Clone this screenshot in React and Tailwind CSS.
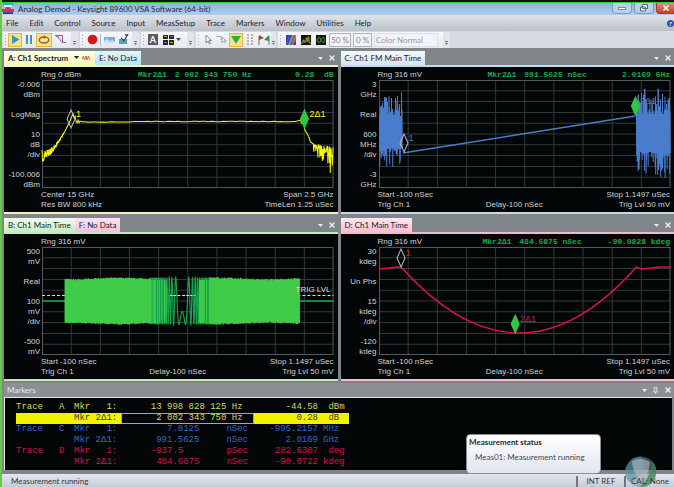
import { useState } from 'react';
import { X, Pin } from 'lucide-react';
import clsx from 'clsx';

const menus = ['File', 'Edit', 'Control', 'Source', 'Input', 'MeasSetup', 'Trace', 'Markers', 'Window', 'Utilities', 'Help'];

// small seeded generator so the noise is the same on every render
const makeRandom = (seed) => {
  let s = seed;
  return () => {
    s = (s * 16807) % 2147483647;
    return s / 2147483647;
  };
};

const toPath = (points) => 'M' + points.map(([x, y]) => `${x.toFixed(1)} ${y.toFixed(1)}`).join('L');

function spectrumPath() {
  const rnd = makeRandom(41);
  const pts = [];
  for (let x = 0; x < 25; x += 0.25) {
    const base = 76 - 31 * Math.pow(x / 26, 1.7);
    const spread = 6 * Math.pow(1 - x / 26, 1.3);
    pts.push([x, base + (rnd() - 0.5) * 2 * spread]);
  }
  pts.push([26, 45], [28, 41], [29, 38], [31, 34], [32, 38], [33, 36], [34, 41], [35, 43], [36, 40], [37, 43], [38, 41]);
  for (let x = 40; x < 256; x += 3) {
    pts.push([x, 42 - (x > 90 ? 0.5 : 0) + (rnd() - 0.5) * 0.6]);
  }
  pts.push([258, 40], [259, 43], [260, 41], [262, 40], [262, 49], [266, 56], [268, 62], [271, 64]);
  for (let x = 271; x <= 291; x += 0.4) {
    const t = (x - 271) / 20;
    pts.push([x, 64 + t * 3 + rnd() * rnd() * (8 + 26 * t)]);
  }
  return toPath(pts);
}

function noisePath(from, to, top, bottom, reach, seed) {
  const rnd = makeRandom(seed);
  const pts = [];
  for (let x = from; x <= to; x += 0.5) {
    pts.push([x, top + 4 - Math.pow(rnd(), 3) * reach]);
    pts.push([x + 0.2, bottom - 4 + Math.pow(rnd(), 3) * reach]);
  }
  return toPath(pts);
}

function chirpPath() {
  const pts = [];
  for (let x = 108; x <= 176; x += 0.1) {
    const d = x - 140;
    pts.push([x, 54 + 23.5 * Math.sin(0.47 + 0.1 * d * d)]);
  }
  return toPath(pts);
}

function burstPath(from, to, fadeFrom, fadeTo, seed) {
  const rnd = makeRandom(seed);
  const pts = [];
  for (let x = from; x <= to; x += 0.5) {
    const wave = 0.8 * Math.sin(x / 16);
    pts.push([x, 31 + wave + rnd() * 1.8], [x, 77 - wave - rnd() * 1.8]);
  }
  let d = toPath(pts);
  const step = fadeTo > fadeFrom ? 1 : -1;
  for (let x = fadeFrom; step * (fadeTo - x) > 0; x += step * (0.8 + rnd() * 2)) {
    d += `M${x.toFixed(1)} 33V76`;
  }
  return d;
}

const panes = [
  {
    id: 'A',
    tabs: [
      { label: 'A: Ch1 Spectrum', tone: 'from-[#ffffec] to-[#f4f6b8]', active: true },
      { label: 'E: No Data', tone: 'from-[#e4f6fc] to-[#b4e4f4]' },
    ],
    strip: 'border-[#f3f3bd]',
    range: 'Rng 0 dBm',
    marker: { name: 'Mkr2Δ1', x: '2 002 343 750 Hz', y: '0.28  dB', indent: 'w-[97px]' },
    scale: [['-0.006', 'dBm'], ['LogMag'], ['10', 'dB', '/div'], ['-100.006', 'dBm']],
    footer: [['Center 15 GHz', 'Span 2.5 GHz'], ['Res BW 800 kHz', 'TimeLen 1.25 uSec']],
    color: '#f6f60c',
    traces: [{ d: spectrumPath() }],
    diamonds: [
      { x: 29, y: 39, label: '1' },
      { x: 262, y: 39, label: '2Δ1', solid: true },
    ],
  },
  {
    id: 'C',
    tabs: [{ label: 'C: Ch1 FM Main Time', tone: 'from-[#f4f9ff] to-[#d3e2f5]' }],
    strip: 'border-[#c6d8ee]',
    range: 'Rng 316 mV',
    marker: { name: 'Mkr2Δ1', x: '991.5625 nSec', y: '2.0169 GHz', indent: 'w-[110px]' },
    scale: [['3', 'GHz'], ['Real'], ['600', 'MHz', '/div'], ['-3', 'GHz']],
    footer: [['Start -100 nSec', 'Stop 1.1497 uSec'], ['Trig Ch 1', 'Trig Lvl 50 mV']],
    delay: 'Delay-100 nSec',
    color: '#4a7ccc',
    traces: [
      { d: noisePath(0.5, 23, 32, 72, 24, 7) },
      { d: noisePath(257, 290.5, 30, 76, 26, 19) },
      { d: 'M24 73L256 36', width: 1.4 },
    ],
    diamonds: [
      { x: 25, y: 63, label: '1' },
      { x: 256, y: 26, label: '2Δ1', solid: true },
    ],
  },
  {
    id: 'B',
    tabs: [
      { label: 'B: Ch1 Main Time', tone: 'from-[#f2fcee] to-[#c6ecc0]' },
      { label: 'F: No Data', tone: 'from-[#ffe4f4] to-[#fabce2]' },
    ],
    strip: 'border-[#c4eab8]',
    range: 'Rng 316 mV',
    scale: [['500', 'mV'], ['Real'], ['100', 'mV', '/div'], ['-500', 'mV']],
    footer: [['Start -100 nSec', 'Stop 1.1497 uSec'], ['Trig Ch 1', 'Trig Lvl 50 mV']],
    delay: 'Delay-100 nSec',
    color: '#40cc48',
    trigger: 'TRIG LVL',
    traces: [
      { d: 'M0 54H23M257 54H291', color: '#14a850', width: 1.6 },
      { d: chirpPath(), color: '#14a04c', width: 1.2 },
      { d: burstPath(23, 108, 109, 124, 3) },
      { d: burstPath(168, 257, 167, 157, 11) },
    ],
    diamonds: [],
  },
  {
    id: 'D',
    tabs: [{ label: 'D: Ch1 Main Time', tone: 'from-[#ffe8f0] to-[#fcbcd0]' }],
    strip: 'border-[#f8b8cc]',
    range: 'Rng 316 mV',
    marker: { name: 'Mkr2Δ1', x: '484.6875 nSec', y: '-90.0828 kdeg', indent: 'w-[105px]' },
    scale: [['30', 'kdeg'], ['Un Phs'], ['15', 'kdeg', '/div'], ['-120', 'kdeg']],
    footer: [['Start -100 nSec', 'Stop 1.1497 uSec'], ['Trig Ch 1', 'Trig Lvl 50 mV']],
    delay: 'Delay-100 nSec',
    color: '#e0104c',
    traces: [{ d: 'M0 22L10 21L18 20L22 20Q140 152 257 20L259 21L262 22L272 21L280 20L291 20', width: 1.4 }],
    diamonds: [
      { x: 22, y: 11, label: '1' },
      { x: 136, y: 77, label: '2Δ1', solid: true },
    ],
  },
];

const markerRows = [
  { trace: 'Trace', id: 'A', name: 'Mkr   1:', x: '13 998 828 125 Hz ', y: '-44.58', unit: ' dBm', tone: 'text-[#d8d85c]' },
  { name: 'Mkr 2Δ1:', x: ' 2 002 343 750 Hz ', y: '0.28', unit: ' dB', tone: 'bg-[#f2f200] text-[#3c3c00]', selected: true },
  { trace: 'Trace', id: 'C', name: 'Mkr   1:', x: '   7.8125     nSec', y: '-995.2157', unit: 'MHz', tone: 'text-[#3468c4]' },
  { name: 'Mkr 2Δ1:', x: ' 991.5625     nSec', y: '2.0169', unit: 'GHz', tone: 'text-[#3468c4]' },
  { trace: 'Trace', id: 'D', name: 'Mkr   1:', x: '-937.5        pSec', y: '282.6307', unit: ' deg', tone: 'text-[#d41448]' },
  { name: 'Mkr 2Δ1:', x: ' 484.6875     nSec', y: '-90.0722', unit: 'kdeg', tone: 'text-[#d41448]' },
];

function TitleBar() {
  return (
    <header className="flex h-[13px] items-start justify-between border-t border-[#38c838] bg-gradient-to-b from-[#8fb2dc] to-[#b4cce8]">
      <div className="flex h-3 items-center gap-1 text-[8px] text-[#1c2c44]">
        <svg width="12" height="12" viewBox="0 0 12 12">
          <path d="M1 0h10v3H8v2H4V3H1z" fill="#28b4c8" />
          <path d="M2 2h8v2H2z" fill="#e8f4fa" />
          <path d="M0 6h3l1-2h4l1 2h3v3H0z" fill="#e0304c" />
          <path d="M1 9h10v2H1z" fill="#3444a0" />
        </svg>
        <h1 className="whitespace-nowrap">Analog Demod - Keysight 89600 VSA Software (64-bit)</h1>
      </div>
      <div className="flex gap-[2px]">
        <button aria-label="Minimize" className="flex h-[11px] w-5 items-center justify-center rounded-b-sm border border-t-0 border-[#7c9cc0] bg-[#b8d0ea]">
          <svg width="8" height="5"><rect x="0.5" y="1.5" width="7" height="2" fill="#fff" stroke="#66788c" strokeWidth="0.8" /></svg>
        </button>
        <button aria-label="Restore" className="flex h-[11px] w-5 items-center justify-center rounded-b-sm border border-t-0 border-[#7c9cc0] bg-[#b8d0ea]">
          <svg width="8" height="8" fill="#f4f8fc" stroke="#56687c"><path d="M2.5.5h5v4h-5zM.5 3h5v4h-5z" /></svg>
        </button>
        <button aria-label="Close" className="flex h-[11px] w-[18px] items-center justify-center rounded-bl-sm border border-t-0 border-r-0 border-[#a03c34] bg-gradient-to-b from-[#e08c7c] to-[#cc3c28]">
          <X className="h-2 w-2 text-white" strokeWidth={5} />
        </button>
      </div>
    </header>
  );
}

function ToolGroup({ children, className }) {
  return (
    <div className={clsx('flex h-4 items-center rounded-r-sm bg-gradient-to-b from-[#f6f7fa] to-[#e6e8f0] pl-[2px]', className)}>
      <svg className="shrink-0" width="3" height="12" fill="#a4a8b4">
        <path d="M0 1h1v1H0zM0 4h1v1H0zM0 7h1v1H0zM0 10h1v1H0z" />
      </svg>
      {children}
      <button aria-label="Toolbar options" className="ml-auto flex h-4 w-[7px] items-end justify-center rounded-r-sm bg-[#e2e4ec] pb-[2px]">
        <svg width="5" height="5" fill="#6c7078"><path d="M1 0h3v1H1zM1 2h3L2.500 4z" /></svg>
      </button>
    </div>
  );
}

function Tool({ label, active, wide, children }) {
  return (
    <button
      aria-label={label}
      className={clsx(
        'flex h-[14px] shrink-0 items-center justify-center',
        wide ? 'w-4' : 'w-[14px]',
        active && 'border border-[#e4b848] bg-[#fbe08c]'
      )}
    >
      {children}
    </button>
  );
}

function Toolbar() {
  const [colorMap, setColorMap] = useState('Color Normal');

  return (
    <div className="flex h-[17px] items-center gap-[2px] bg-[#d6d9e2] pl-[1px]">
      <ToolGroup className="w-[75px]">
        <Tool label="Run" active>
          <svg width="9" height="9"><path d="M1 0L8.5 4.5L1 9z" fill="#2c9cc4" /></svg>
        </Tool>
        <Tool label="Pause">
          <svg width="8" height="9" fill="#3c94c4"><path d="M1 0h2v9H1zM5 0h2v9H5z" /></svg>
        </Tool>
        <Tool label="Repeat" active wide>
          <svg width="12" height="9" fill="none" stroke="#8c6430" strokeWidth="1.3">
            <ellipse cx="6" cy="5" rx="4.800" ry="3" />
            <path d="M7 0L4.500 2L7 4z" fill="#8c6430" stroke="none" />
          </svg>
        </Tool>
        <Tool label="Restart" wide>
          <svg width="11" height="11" fill="none" stroke="#985c9c">
            <path d="M0 1.500H7.500V8.500H11M2.500 2L7 8.500" />
            <path d="M1 1l3 0-2 3z" fill="#985c9c" stroke="none" />
          </svg>
        </Tool>
      </ToolGroup>

      <ToolGroup className="w-[59px]">
        <Tool label="Record">
          <svg width="11" height="11"><circle cx="5.500" cy="5.500" r="4.800" fill="#d8141c" /></svg>
        </Tool>
        <span className="mx-px h-3 w-px bg-[#b4b8c4]" />
        <Tool label="Recording">
          <svg width="11" height="8">
            <rect width="11" height="6" y="1" fill="#7cb4d8" />
            <path d="M0 5l3-2 3 2 2-1 3 2v1H0z" fill="#c4e0f0" />
          </svg>
        </Tool>
        <Tool label="Recall">
          <svg width="11" height="11">
            <rect x="1" y="5" width="8" height="5" fill="#5ca0c8" />
            <path d="M3 4L6 7L10 0M7 1h3" fill="none" stroke="#3c5468" strokeWidth="1.300" />
          </svg>
        </Tool>
      </ToolGroup>

      <ToolGroup className="w-[53px]">
        <Tool label="Annotation">
          <span className="flex h-[11px] w-[10px] items-center justify-center bg-[#585c60] text-[9px] font-bold leading-none text-white">A</span>
        </Tool>
        <Tool label="Layout" wide>
          <svg width="11" height="10">
            <path d="M0 0h5v4H0zM6 0h5v4H6zM0 5h5v5H0zM6 5h5v5H6z" fill="#28281c" />
            <path d="M1 1h3v1H1zM7 7h3v1H7z" fill="#b8b430" />
            <path d="M7 1h3v1H7zM1 7h3v1H1z" fill="#9c5cac" />
          </svg>
        </Tool>
        <svg width="5" height="3" fill="#44484f"><path d="M0 0h5L2.500 3z" /></svg>
      </ToolGroup>

      <ToolGroup className="w-[80px]">
        <Tool label="Pointer">
          <svg width="8" height="11"><path d="M2 1v8l2-2 1.500 3 1-.5L5 6.500h2.500z" fill="#fff" stroke="#787c84" strokeWidth="0.900" /></svg>
        </Tool>
        <Tool label="Zoom pointer">
          <svg width="12" height="11">
            <path d="M0 2.500h5V6" fill="none" stroke="#a4a8b0" />
            <path d="M6 3v6l2-2 1.500 2.500M6 3l4.500 4H8" fill="none" stroke="#a0a4ac" />
          </svg>
        </Tool>
        <Tool label="Marker" active>
          <svg width="10" height="8"><path d="M0 0h10L5 8z" fill="#24b43c" /></svg>
        </Tool>
        <Tool label="Band markers">
          <svg width="6" height="11">
            <path d="M1 0v11" stroke="#787c84" strokeDasharray="2 1" />
            <path d="M5 0v11" stroke="#a85c6c" strokeDasharray="2 1" />
          </svg>
        </Tool>
        <Tool label="Limit flags">
          <svg width="12" height="10">
            <path d="M1 1v9M11 1v9" stroke="#686c70" />
            <path d="M1 0l5 3-5 2z" fill="#d82c38" />
            <path d="M11 0L6 5l5 1z" fill="#289c48" />
          </svg>
        </Tool>
      </ToolGroup>

      <ToolGroup className="w-[172px] gap-px">
        <Tool label="Color map">
          <svg width="10" height="10">
            <rect width="10" height="10" fill="#3444b4" />
            <path d="M2 10L6 0h2L4 10z" fill="#3cc864" />
            <path d="M5 10L8 0h2v4L7 10z" fill="#e0506c" />
            <path d="M0 8L3 0h1L1 10H0z" fill="#7c3cc8" />
          </svg>
        </Tool>
        <Tool label="Spectrogram">
          <svg width="10" height="10">
            <rect width="10" height="10" fill="#10140c" />
            <path d="M0 8h2V5h1v2h2V3h1v3h1V2h1v6h2" fill="none" stroke="#a8a428" />
          </svg>
        </Tool>
        <Tool label="Persistence">
          <svg width="10" height="10">
            <rect width="10" height="10" fill="#10180c" />
            <path d="M1 5q2-5 4 0t4 0M1 5q2 5 4 0t4 0" fill="none" stroke="#548c28" />
          </svg>
        </Tool>
        <input aria-label="Persistence" readOnly value="50 %" className="h-[14px] w-[22px] border border-[#b0b4bc] bg-[#f2f3f7] text-center text-[8px] text-[#84888e]" />
        <input aria-label="Threshold" readOnly value="0 %" className="mx-px h-[14px] w-[19px] border border-[#b0b4bc] bg-[#f2f3f7] text-center text-[8px] text-[#84888e]" />
        <select
          aria-label="Color map"
          value={colorMap}
          onChange={(e) => setColorMap(e.target.value)}
          className="h-[14px] w-[64px] appearance-none border border-[#dcdfe6] bg-[#f2f3f7] px-px text-[8px] text-[#94989e]"
        >
          <option>Color Normal</option>
          <option>Color Reverse</option>
        </select>
      </ToolGroup>
    </div>
  );
}

function PaneControls({ pin }) {
  return (
    <div className="ml-auto flex items-center gap-[5px] pr-[2px] text-[#eceef0]">
      <button aria-label="Pane menu">
        <svg width="5" height="3" fill="currentColor"><path d="M0 0h5L2.500 3z" /></svg>
      </button>
      {pin && <button aria-label="Pin"><Pin className="h-[7px] w-[7px]" strokeWidth={3} /></button>}
      <button aria-label="Close pane"><X className="h-[8px] w-[8px]" strokeWidth={4} /></button>
    </div>
  );
}

function Grid() {
  const lines = [1, 2, 3, 4, 5, 6, 7, 8, 9];
  return (
    <g stroke="#34383a" strokeWidth="1">
      {lines.map((n) => (
        <path key={n} d={`M${n * 29.1} 0V108M0 ${n * 10.8}H291`} />
      ))}
      <rect x="0.5" y="0.5" width="290" height="107" fill="none" stroke="#54585a" />
    </g>
  );
}

function Plot({ pane }) {
  return (
    <div className="relative h-[108px]">
      <svg className="h-full w-full overflow-visible" viewBox="0 0 291 108" preserveAspectRatio="none">
        <Grid />
        {pane.trigger && <path d="M0 48.500H291" stroke="#d8dcd8" strokeDasharray="3 2" />}
        {pane.traces.map((t, i) => (
          <path key={i} d={t.d} fill="none" stroke={t.color || pane.color} strokeWidth={t.width || 1} />
        ))}
        {pane.trigger && <path d="M128 48.500H153" stroke="#d8dcd8" strokeDasharray="2 2" />}
        {pane.diamonds.map((m) => (
          <path
            key={m.label}
            d={`M${m.x} ${m.y - 9}L${m.x + 4} ${m.y}L${m.x} ${m.y + 9}L${m.x - 4} ${m.y}z`}
            fill={m.solid ? '#2cc844' : 'none'}
            stroke={m.solid ? '#2cc844' : '#b8bcb8'}
          />
        ))}
      </svg>
      {pane.diamonds.map((m) => (
        <span
          key={m.label}
          className="absolute ml-[5px] -mt-[10px] text-[9px] leading-[10px]"
          style={{ left: `${(m.x / 291) * 100}%`, top: m.y, color: pane.color }}
        >
          {m.label}
        </span>
      ))}
      {pane.trigger && (
        <span className="absolute right-[3px] top-[38px] text-[8px] leading-[10px] text-[#d8dcdc]">{pane.trigger}</span>
      )}
    </div>
  );
}

function Pane({ pane }) {
  return (
    <section>
      <div className="flex h-[14px] items-end">
        {pane.tabs.map((tab) => (
          <button
            key={tab.label}
            className={clsx(
              'flex h-full items-center gap-1 whitespace-nowrap bg-gradient-to-b px-1 text-[8px] text-[#1c2024]',
              tab.tone,
              tab.active && 'font-bold'
            )}
          >
            {tab.label}
            {tab.active && (
              <svg width="19" height="6">
                <path d="M2 1h5L4.500 4z" fill="#202020" />
                <path d="M10 4l1.500-3 1 4 1.500-4 1 4 1.500-4 1 4" fill="none" stroke="#d86458" />
              </svg>
            )}
          </button>
        ))}
        <div className="ml-auto flex h-full items-center"><PaneControls /></div>
      </div>
      <div className={clsx('border-y-2 bg-[#020606] pb-[2px] pr-1 pt-[3px] font-["Liberation_Sans",sans-serif] text-[8px] leading-[10px] text-[#d0d4d4]', pane.strip)}>
        <div className="flex pl-[37px]">
          <span className={clsx('whitespace-nowrap', pane.marker ? pane.marker.indent : 'flex-1')}>{pane.range}</span>
          {pane.marker && (
            <div className='flex flex-1 gap-2 whitespace-pre font-["Liberation_Mono",monospace] text-[8px] font-bold text-[#14a850]'>
              <span>{pane.marker.name}</span>
              <span>{pane.marker.x}</span>
              <span className="ml-auto">{pane.marker.y}</span>
            </div>
          )}
        </div>
        <div className="flex gap-[2px]">
          <div className="flex h-[110px] w-9 shrink-0 flex-col justify-between text-right">
            {pane.scale.map((lines, i) => (
              <div key={i}>
                {lines.map((line) => <div key={line} className="flex justify-end whitespace-nowrap">{line}</div>)}
              </div>
            ))}
          </div>
          <div className="min-w-0 flex-1"><Plot pane={pane} /></div>
        </div>
        <div className="grid grid-cols-[37%_20%_43%] whitespace-nowrap pl-[37px]">
          <span>{pane.footer[0][0]}</span>
          <span className="col-span-2 text-right">{pane.footer[0][1]}</span>
          <span>{pane.footer[1][0]}</span>
          <span>{pane.delay}</span>
          <span className="flex justify-end">{pane.footer[1][1]}</span>
        </div>
      </div>
    </section>
  );
}

function MarkersPanel() {
  return (
    <section className="relative mt-[2px]">
      <div className="flex h-[14px] items-center bg-[#8c9092] pl-[3px] text-[8px] text-[#e8eaec]">
        <h2>Markers</h2>
        <PaneControls pin />
      </div>
      <div className="mr-[2px] border-l border-t border-[#e4e6e8] bg-[#020606] pb-[2px] pl-[11px] pt-1">
        <table className='border-collapse whitespace-pre font-["Liberation_Mono",monospace] text-[9px] leading-[11px]'>
          <tbody>
            {markerRows.map((row) => (
              <tr key={row.x} className={row.tone}>
                <td className="w-[43px] p-0">{row.trace}</td>
                <td className="w-[15px] p-0">{row.id}</td>
                <td className="w-[47px] p-0">{row.name}</td>
                <td
                  className={clsx(
                    'w-[133px] p-0 pr-[6px] text-right',
                    row.selected && 'bg-[#020606] text-[#d8d85c] shadow-[inset_0_0_0_1px_#b8b820]'
                  )}
                >
                  {row.x}
                </td>
                <td className="w-[64px] p-0 text-right">{row.y}</td>
                <td className="w-[31px] p-0 pl-[5px]">{row.unit}</td>
              </tr>
            ))}
          </tbody>
        </table>
      </div>
      <div role="tooltip" className="absolute bottom-[-4px] right-[73px] h-10 w-[135px] rounded-sm border border-[#888c90] bg-gradient-to-b from-white to-[#e2e4f0] px-[2px] py-[2px] text-[8px] leading-[11px] text-[#44484c] shadow-md">
        <p className="font-bold text-[#282c30]">Measurement status</p>
        <p className="mt-1 pl-[6px]">Meas01: Measurement running</p>
      </div>
    </section>
  );
}

function StatusBar() {
  return (
    <footer className="relative mt-1 flex h-[13px] items-end bg-gradient-to-b from-[#e4e8ee] to-[#c4ccd6] pl-[9px] text-[8px] leading-[11px] text-[#34383e]">
      <span>Measurement running</span>
      <span className="ml-auto w-12 border-l-2 border-[#74787e] text-center">INT REF</span>
      <span className="z-10 w-[50px] border-l-2 border-[#74787e] text-center">CAL: None</span>
      <svg className="absolute bottom-0 right-4" width="34" height="32" viewBox="0 0 34 32">
        <circle cx="17" cy="17" r="15.500" fill="#7c9098" fillOpacity="0.500" />
        <path d="M17 1.500A15.500 15.500 0 0 0 4 26Q14 26 18 16T17 1.500z" fill="#4c90a8" fillOpacity="0.500" />
        <path d="M28 6A15.500 15.500 0 0 1 16 32Q26 24 28 6z" fill="#3c8454" fillOpacity="0.700" />
        <path d="M8 6Q17 1 26 7Q26 17 17 26Q8 17 8 6z" fill="#b8c0c4" fillOpacity="0.600" />
      </svg>
    </footer>
  );
}

export default function App() {
  return (
    <div className='overflow-hidden border-l-2 border-[#68c848] bg-[#80858a] font-["Lato",sans-serif]'>
      <div className="h-[2px] bg-[#101418]" />
      <TitleBar />
      <nav className="flex h-4 items-center gap-[11px] bg-gradient-to-b from-[#dfe3ec] to-[#bcc0c6] pl-1 text-[8px] text-[#202428]">
        {menus.map((item) => <button key={item}>{item}</button>)}
        <span className="ml-auto flex h-[7px] w-[7px] items-center justify-center rounded-full bg-[#2c50b8] text-[6px] font-bold text-white">?</span>
      </nav>
      <Toolbar />
      <main className="pl-[2px] pt-[3px]">
        <div className="grid grid-cols-2 gap-x-[3px] gap-y-1">
          {panes.map((pane) => <Pane key={pane.id} pane={pane} />)}
        </div>
        <MarkersPanel />
      </main>
      <StatusBar />
    </div>
  );
}
